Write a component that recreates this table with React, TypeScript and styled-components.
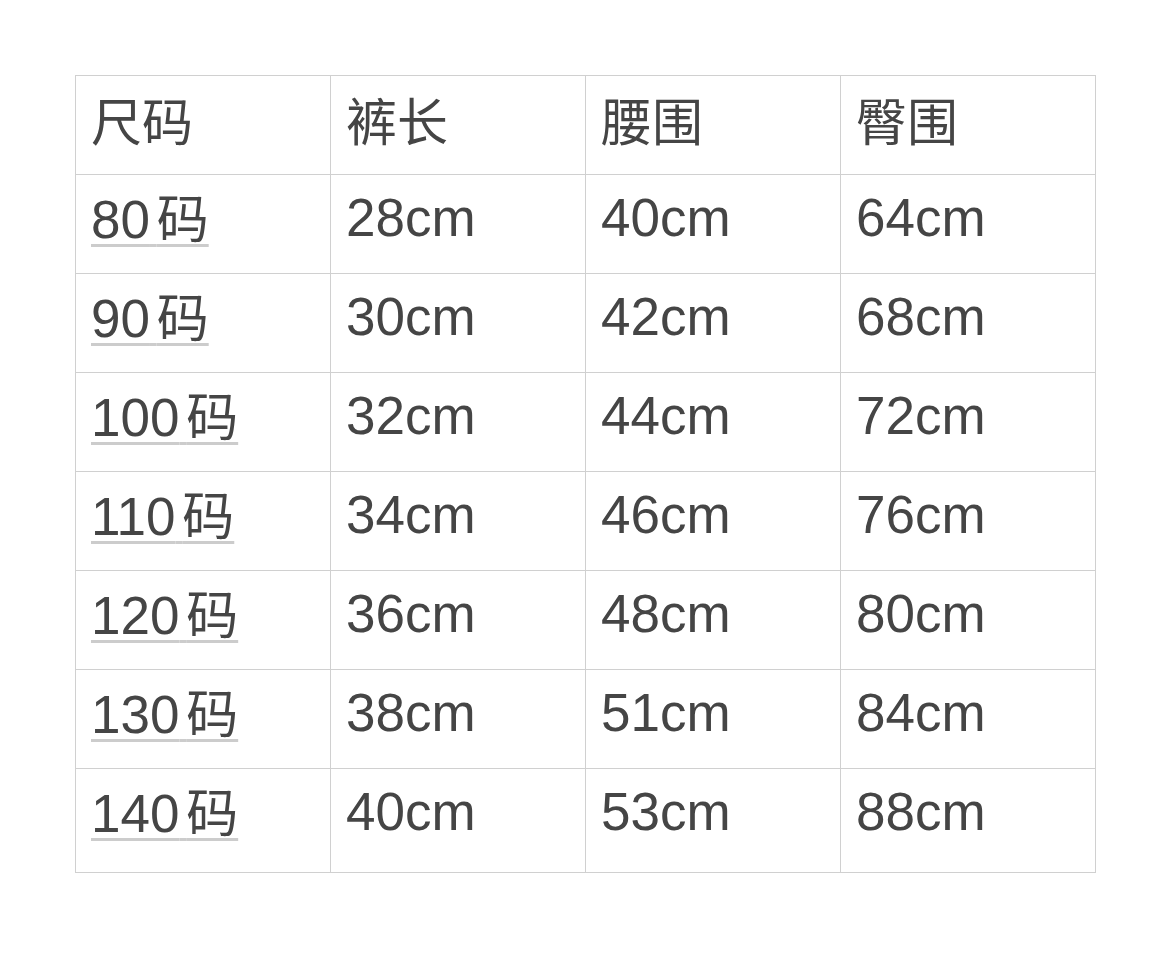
import React from "react";
import styled, { createGlobalStyle } from "styled-components";

const Global = createGlobalStyle`
  html, body { margin: 0; padding: 0; background: #fff; }
  body { font-family: "Liberation Sans", "Noto Sans CJK SC", sans-serif; }
`;

const Page = styled.div`
  padding: 75px 0 0 75px;
`;

const Table = styled.table`
  border-collapse: collapse;
  table-layout: fixed;
  width: 1020px;
  color: #454545;
`;

const Cell = styled.td<{ $last?: boolean }>`
  width: 255px;
  height: ${(p) => (p.$last ? 104 : 99)}px;
  box-sizing: border-box;
  border: 1px solid #d0d0d0;
  padding: 0 0 ${(p) => (p.$last ? 17 : 12)}px 15px;
  vertical-align: middle;
  font-size: 53px;
  line-height: 60px;
  font-family: "Liberation Sans", "Noto Sans CJK SC", sans-serif;
  white-space: nowrap;
`;

const HeadCell = styled(Cell).attrs({ as: "th" })`
  font-weight: normal;
  text-align: left;
  font-family: "Noto Sans CJK SC", sans-serif;
  font-size: 51px;
`;

const SizeLink = styled.span`
  font-family: "Liberation Sans", "Noto Sans CJK SC", sans-serif;
  font-size: 53px;
  word-spacing: -8px;
  text-decoration: underline;
  text-decoration-color: #cccccc;
  text-decoration-thickness: 3px;
  text-underline-offset: 6px;
`;

const Unit = styled.span`
  font-family: "Noto Sans CJK SC", sans-serif;
  font-size: 52px;
`;

const headers = ["尺码", "裤长", "腰围", "臀围"];
const rows = [
  ["80", "28cm", "40cm", "64cm"],
  ["90", "30cm", "42cm", "68cm"],
  ["100", "32cm", "44cm", "72cm"],
  ["110", "34cm", "46cm", "76cm"],
  ["120", "36cm", "48cm", "80cm"],
  ["130", "38cm", "51cm", "84cm"],
  ["140", "40cm", "53cm", "88cm"],
];

export default function App() {
  return (
    <Page>
      <Global />
      <Table>
        <thead>
          <tr>
            {headers.map((h) => (
              <HeadCell key={h}>{h}</HeadCell>
            ))}
          </tr>
        </thead>
        <tbody>
          {rows.map((r, i) => {
            const last = i === rows.length - 1;
            return (
              <tr key={r[0]}>
                <Cell $last={last}>
                  <SizeLink>
                    {r[0]} <Unit>码</Unit>
                  </SizeLink>
                </Cell>
                {r.slice(1).map((v, j) => (
                  <Cell key={j} $last={last}>
                    {v}
                  </Cell>
                ))}
              </tr>
            );
          })}
        </tbody>
      </Table>
    </Page>
  );
}
